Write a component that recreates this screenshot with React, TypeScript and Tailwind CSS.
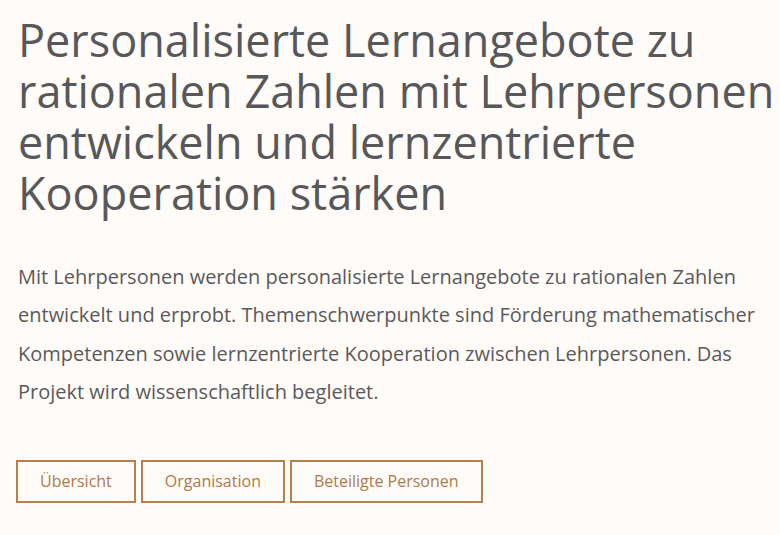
const font = { fontFamily: '"Open Sans", "Noto Sans", sans-serif' };

const links = ["Übersicht", "Organisation", "Beteiligte Personen"];

export default function App() {
  return (
    <div className="min-h-[535px] bg-[#fffbf8] pl-[18px] pt-[14px]" style={font}>
      <h1 className="text-[45px] leading-[51px] font-normal text-[#58585a]">
        Personalisierte Lernangebote zu rationalen Zahlen mit Lehrpersonen entwickeln und lernzentrierte Kooperation stärken
      </h1>
      <p className="mt-[40px] max-w-[760px] text-[20px] leading-[38.4px] text-[#5a5a5c]">
        Mit Lehrpersonen werden personalisierte Lernangebote zu rationalen Zahlen entwickelt und erprobt. Themenschwerpunkte sind Förderung mathematischer Kompetenzen sowie lernzentrierte Kooperation zwischen Lehrpersonen. Das Projekt wird wissenschaftlich begleitet.
      </p>
      <nav className="mt-[48px] flex gap-[5px] -ml-[2px]">
        {links.map((l) => (
          <a
            key={l}
            href="#"
            className="flex h-[43px] items-center border-2 border-[#b67f4c] px-[22px] text-[16px] font-medium text-[#b07a48]"
          >
            {l}
          </a>
        ))}
      </nav>
    </div>
  );
}
